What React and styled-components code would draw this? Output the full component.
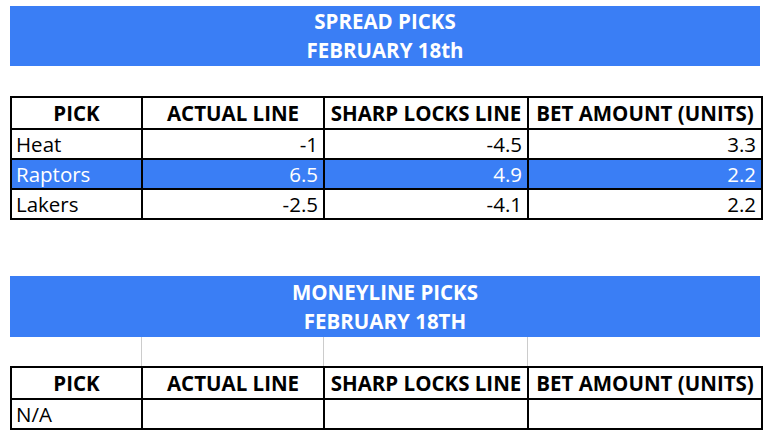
import React from "react";
import styled, { createGlobalStyle } from "styled-components";

const Global = createGlobalStyle`
  html, body { margin: 0; padding: 0; background: #fff; }
  body { font-family: "Open Sans", Lato, "Liberation Sans", sans-serif; }
`;

const BLUE = "#3a7ef5";

const Page = styled.div`
  width: 768px;
  height: 440px;
  box-sizing: border-box;
  padding: 6px 0 0 10px;
  display: flex;
  flex-direction: column;
`;

const Section = styled.section`
  display: flex;
  flex-direction: column;
  width: 751px;
  margin-top: ${(p) => p.$top || 0}px;
`;

const Banner = styled.div`
  height: ${(p) => p.$h}px;
  width: 750px;
  background: ${BLUE};
  color: #fff;
  font-weight: 700;
  font-size: 20.5px;
  line-height: 29px;
  text-align: center;
  display: flex;
  flex-direction: column;
  justify-content: center;
`;

const Spacer = styled.div`
  height: ${(p) => p.$h}px;
`;

const GapRow = styled.div`
  height: 29px;
  display: grid;
  grid-template-columns: 131px 182px 204px 234px;
  & > div + div {
    border-left: 1px solid #cccccc;
  }
`;

const Table = styled.table`
  border-collapse: collapse;
  table-layout: fixed;
  width: 751px;
  font-size: 20.5px;
  color: #000;
`;

const HeadRow = styled.tr`
  height: 32px;
`;

const Th = styled.th`
  border: 2px solid #000;
  padding: 0 2px;
  font-weight: 700;
  text-align: center;
  white-space: nowrap;
  line-height: 26px;
`;

const Tr = styled.tr`
  height: 30px;
  background: ${(p) => (p.$hl ? BLUE : "#fff")};
  color: ${(p) => (p.$hl ? "#fff" : "#000")};
`;

const Td = styled.td`
  border: 2px solid #000;
  padding: 0 5px 0 4px;
  line-height: 26px;
  text-align: ${(p) => (p.$num ? "right" : "left")};
  white-space: nowrap;
`;

const COLS = [131, 182, 204, 234];
const HEAD = ["PICK", "ACTUAL LINE", "SHARP LOCKS LINE", "BET AMOUNT (UNITS)"];

const spread = [
  { pick: "Heat", actual: "-1", sharp: "-4.5", bet: "3.3" },
  { pick: "Raptors", actual: "6.5", sharp: "4.9", bet: "2.2", hl: true },
  { pick: "Lakers", actual: "-2.5", sharp: "-4.1", bet: "2.2" },
];

const money = [{ pick: "N/A", actual: "", sharp: "", bet: "" }];

function PicksTable({ rows }) {
  return (
    <Table>
      <colgroup>
        {COLS.map((w, i) => (
          <col key={i} style={{ width: w }} />
        ))}
      </colgroup>
      <thead>
        <HeadRow>
          {HEAD.map((h) => (
            <Th key={h}>{h}</Th>
          ))}
        </HeadRow>
      </thead>
      <tbody>
        {rows.map((r) => (
          <Tr key={r.pick} $hl={r.hl}>
            <Td>{r.pick}</Td>
            <Td $num>{r.actual}</Td>
            <Td $num>{r.sharp}</Td>
            <Td $num>{r.bet}</Td>
          </Tr>
        ))}
      </tbody>
    </Table>
  );
}

export default function App() {
  return (
    <>
      <Global />
      <Page>
        <Section>
          <Banner $h={60}>
            <div>SPREAD PICKS</div>
            <div>FEBRUARY 18th</div>
          </Banner>
          <Spacer $h={30} />
          <PicksTable rows={spread} />
        </Section>
        <Section $top={56}>
          <Banner $h={61}>
            <div>MONEYLINE PICKS</div>
            <div>FEBRUARY 18TH</div>
          </Banner>
          <GapRow>
            <div />
            <div />
            <div />
            <div />
          </GapRow>
          <PicksTable rows={money} />
        </Section>
      </Page>
    </>
  );
}
